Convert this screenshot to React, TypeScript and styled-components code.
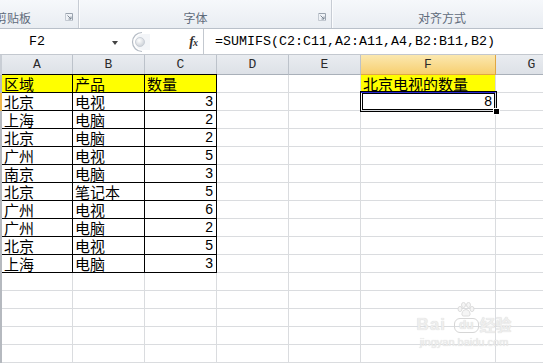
import React from "react";
import styled, { createGlobalStyle, css } from "styled-components";

const GlobalStyle = createGlobalStyle`
  html, body { margin: 0; padding: 0; width: 543px; height: 363px; overflow: hidden; background: #fff; }
  #root { width: 543px; height: 363px; }
`;

const Page = styled.div`
  position: relative;
  width: 543px;
  height: 363px;
  overflow: hidden;
  display: flex;
  flex-direction: column;
  font-family: "Noto Sans CJK SC", sans-serif;
`;

/* ---------- Ribbon ---------- */
const Ribbon = styled.div`
  height: 28px;
  flex: none;
  display: flex;
  background: linear-gradient(#f6f8fb, #e9edf2);
  border-bottom: 1px solid #b9c0c9;
`;

const Group = styled.div<{ $w: number; $shift?: number }>`
  width: ${(p) => p.$w}px;
  margin-left: ${(p) => p.$shift ?? 0}px;
  flex: none;
  display: flex;
  align-items: flex-end;
  border-right: 1px solid #c7ccd4;
  box-shadow: 1px 0 0 #fbfcfd;
`;

const GroupLabel = styled.div`
  flex: 1;
  text-align: center;
  font-size: 12px;
  line-height: 16px;
  height: 18px;
  color: #5f6b7b;
  white-space: nowrap;
`;

const Launcher = styled.div`
  width: 19px;
  height: 18px;
  flex: none;
  display: flex;
  align-items: center;
  justify-content: center;
  padding-bottom: 4px;
  box-sizing: border-box;
`;

const LauncherIcon = () => (
  <svg width="8" height="8" viewBox="0 0 8 8">
    <path d="M0.5 0.5H7.5V7.5" fill="none" stroke="#9aa3ae" />
    <path d="M0.5 0.5V7.5H7.5" fill="none" stroke="#c3c9d1" />
    <path d="M2.5 2.5L6 6M6 3.5V6H3.5" fill="none" stroke="#7d8794" />
  </svg>
);

/* ---------- Formula bar ---------- */
const FormulaBar = styled.div`
  height: 26px;
  flex: none;
  display: flex;
  background: #fff;
  border-bottom: 1px solid #c3c8cf;
  box-sizing: border-box;
`;

const NameBox = styled.div`
  width: 124px;
  flex: none;
  display: grid;
  grid-template-columns: 74px 1fr 12px;
  align-items: center;
`;

const MonoText = styled.span`
  font-family: "Liberation Mono", monospace;
  font-size: 13.33px;
  color: #000;
  white-space: nowrap;
`;

const NameText = styled(MonoText)`
  text-align: center;
`;

const DropArrow = styled.div`
  width: 0;
  height: 0;
  border-left: 3.5px solid transparent;
  border-right: 3.5px solid transparent;
  border-top: 4px solid #444;
  margin-top: 2px;
`;

const SplitterWrap = styled.div`
  width: 22px;
  margin-left: 4px;
  flex: none;
  display: flex;
  align-items: center;
`;

const Splitter = () => (
  <svg width="22" height="22" viewBox="0 0 22 22">
    <defs>
      <radialGradient id="knob" cx="0.4" cy="0.35" r="0.7">
        <stop offset="0" stopColor="#ffffff" />
        <stop offset="1" stopColor="#c9ced5" />
      </radialGradient>
    </defs>
    <path d="M14 1.5A9.5 9.5 0 0 0 14 20.5" fill="none" stroke="#b5bcc5" strokeWidth="1.2" />
    <path d="M15 3A8 8 0 0 0 15 19H22V3Z" fill="#f3f5f8" />
    <circle cx="12" cy="11" r="4.5" fill="url(#knob)" stroke="#c2c8d0" strokeWidth="0.8" />
  </svg>
);

const FxArea = styled.div`
  width: 53px;
  flex: none;
  display: flex;
  align-items: center;
  justify-content: flex-end;
  padding-right: 6px;
  box-sizing: border-box;
`;

const Fx = styled.span`
  font-family: "Liberation Serif", serif;
  font-style: italic;
  font-weight: bold;
  font-size: 14px;
  color: #333;
  letter-spacing: -1px;
  & small { font-size: 10px; }
`;

const FormulaInput = styled.div`
  flex: 1;
  display: flex;
  align-items: center;
  padding-left: 11px;
  border-left: 1px solid #c3c8cf;
`;

/* ---------- Sheet ---------- */
const Sheet = styled.div`
  flex: none;
  display: grid;
  grid-template-columns: 2px 71px 72px 72px 72px 72px 135px 72px;
  grid-template-rows: 20px repeat(16, 18px);
`;

const Edge = styled.div<{ $on?: boolean; $head?: boolean }>`
  background: ${(p) => (p.$on ? "#efb850" : p.$head ? "#c9ced5" : "#b5b9bf")};
`;

const ColHead = styled.div<{ $sel?: boolean }>`
  box-sizing: border-box;
  display: flex;
  align-items: flex-end;
  justify-content: center;
  padding-bottom: 2px;
  font-family: "Liberation Mono", monospace;
  font-size: 13px;
  color: #2b2b2b;
  background: linear-gradient(#e9ecf0, #dde1e7);
  border-right: 1px solid #bcc2ca;
  border-bottom: 1px solid #a9b0b9;
  ${(p) =>
    p.$sel &&
    css`
      background: linear-gradient(#fbe8b0, #f7cf70);
      border-right-color: #e0a743;
      border-bottom-color: #e0a743;
    `}
`;

const Cell = styled.div<{
  $table?: boolean;
  $yellow?: boolean;
  $right?: boolean;
  $num?: boolean;
  $top?: boolean;
  $blueBottom?: boolean;
}>`
  box-sizing: border-box;
  border-right: 1px solid ${(p) => (p.$table ? "#000" : "#dadcdf")};
  border-bottom: 1px solid ${(p) => (p.$table ? "#000" : p.$blueBottom ? "#2a2ad0" : "#dadcdf")};
  background: ${(p) => (p.$yellow ? "#ffff00" : "#fff")};
  display: flex;
  align-items: center;
  justify-content: ${(p) => (p.$right ? "flex-end" : "flex-start")};
  padding: 0 ${(p) => (p.$right ? 3 : 0)}px 0 ${(p) => (p.$right ? 0 : 2)}px;
  font-family: ${(p) => (p.$num ? `"Liberation Sans", sans-serif` : `"Noto Sans CJK SC", sans-serif`)};
  font-size: ${(p) => (p.$num ? 14 : 15)}px;
  line-height: 17px;
  color: #000;
  white-space: nowrap;
  ${(p) => p.$top && css`box-shadow: 0 -1px 0 #000;`}
`;

const ActiveCell = styled(Cell)`
  position: relative;
  z-index: 1;
  &::after {
    content: "";
    position: absolute;
    top: -2px;
    left: -1px;
    right: -2px;
    bottom: -2px;
    border: 3px double #000;
    box-sizing: border-box;
    pointer-events: none;
  }
  &::before {
    content: "";
    position: absolute;
    right: -5px;
    bottom: -5px;
    width: 5px;
    height: 5px;
    background: #000;
    border: 1px solid #fff;
    z-index: 2;
  }
`;

/* ---------- Watermark ---------- */
const Watermark = styled.div`
  position: absolute;
  left: 415px;
  top: 302px;
  width: 98px;
  display: flex;
  flex-direction: column;
  align-items: center;
  color: #eeeeee;
  text-shadow: 0 0 1px #cfcfcf;
  pointer-events: none;
`;

const MarkRow = styled.div`
  display: flex;
  align-items: flex-end;
  gap: 1px;
`;

const Bai = styled.span`
  font-family: "Liberation Sans", sans-serif;
  font-weight: bold;
  font-size: 17px;
  line-height: 17px;
  letter-spacing: 1px;
  margin-right: 7px;
`;

const DuBox = styled.div`
  display: flex;
  flex-direction: column;
  align-items: center;
  gap: 1px;
`;

const Du = styled.span`
  font-family: "Liberation Sans", sans-serif;
  font-weight: bold;
  font-size: 12px;
  line-height: 13px;
  padding: 0 4px;
  border: 1px solid #d6d6d6;
  border-radius: 6px;
`;

const Jy = styled.span`
  font-size: 16px;
  line-height: 17px;
  font-weight: bold;
`;

const Url = styled.span`
  font-family: "Liberation Sans", sans-serif;
  font-size: 11px;
  line-height: 12px;
  margin-top: 3px;
`;

const Paw = () => (
  <svg width="18" height="15" viewBox="0 0 18 15">
    <g fill="#f5f5f5" stroke="#d6d6d6" strokeWidth="0.8">
      <ellipse cx="3" cy="7" rx="2" ry="2.6" />
      <ellipse cx="6.5" cy="3" rx="2" ry="2.6" />
      <ellipse cx="11.5" cy="3" rx="2" ry="2.6" />
      <ellipse cx="15" cy="7" rx="2" ry="2.6" />
      <path d="M9 7.5C6 7.5 4.5 11 5 13C5.5 14.5 7.5 14 9 14C10.5 14 12.5 14.5 13 13C13.5 11 12 7.5 9 7.5Z" />
    </g>
  </svg>
);

const cols = ["A", "B", "C", "D", "E", "F", "G"];

const data: [string, string, string][] = [
  ["北京", "电视", "3"],
  ["上海", "电脑", "2"],
  ["北京", "电脑", "2"],
  ["广州", "电视", "5"],
  ["南京", "电脑", "3"],
  ["北京", "笔记本", "5"],
  ["广州", "电视", "6"],
  ["广州", "电脑", "2"],
  ["北京", "电视", "5"],
  ["上海", "电脑", "3"],
];

export default function App() {
  const rows: React.ReactNode[] = [];

  rows.push(
    <React.Fragment key="r1">
      <Edge />
      <Cell $table $yellow $top>区域</Cell>
      <Cell $table $yellow $top>产品</Cell>
      <Cell $table $yellow $top>数量</Cell>
      <Cell />
      <Cell />
      <Cell $yellow $blueBottom>北京电视的数量</Cell>
      <Cell />
    </React.Fragment>
  );

  data.forEach((d, i) => {
    rows.push(
      <React.Fragment key={"d" + i}>
        <Edge $on={i === 0} />
        <Cell $table>{d[0]}</Cell>
        <Cell $table>{d[1]}</Cell>
        <Cell $table $right $num>{d[2]}</Cell>
        <Cell />
        <Cell />
        {i === 0 ? <ActiveCell $right $num>8</ActiveCell> : <Cell />}
        <Cell />
      </React.Fragment>
    );
  });

  for (let i = 0; i < 5; i++) {
    rows.push(
      <React.Fragment key={"e" + i}>
        <Edge />
        {cols.map((c) => (
          <Cell key={c} />
        ))}
      </React.Fragment>
    );
  }

  return (
    <>
      <GlobalStyle />
      <Page>
        <Ribbon>
          <Group $w={111} $shift={-33}>
            <GroupLabel>剪贴板</GroupLabel>
            <Launcher>
              <LauncherIcon />
            </Launcher>
          </Group>
          <Group $w={252}>
            <GroupLabel>字体</GroupLabel>
            <Launcher>
              <LauncherIcon />
            </Launcher>
          </Group>
          <Group $w={220}>
            <GroupLabel>对齐方式</GroupLabel>
          </Group>
        </Ribbon>

        <FormulaBar>
          <NameBox>
            <NameText>F2</NameText>
            <span />
            <DropArrow />
          </NameBox>
          <SplitterWrap>
            <Splitter />
          </SplitterWrap>
          <FxArea>
            <Fx>
              f<small>x</small>
            </Fx>
          </FxArea>
          <FormulaInput>
            <MonoText>=SUMIFS(C2:C11,A2:A11,A4,B2:B11,B2)</MonoText>
          </FormulaInput>
        </FormulaBar>

        <Sheet>
          <Edge $head />
          {cols.map((c) => (
            <ColHead key={c} $sel={c === "F"}>
              {c}
            </ColHead>
          ))}
          {rows}
        </Sheet>

        <Watermark>
          <MarkRow>
            <Bai>Bai</Bai>
            <DuBox>
              <Paw />
              <Du>du</Du>
            </DuBox>
            <Jy>经验</Jy>
          </MarkRow>
          <Url>jingyan.baidu.com</Url>
        </Watermark>
      </Page>
    </>
  );
}
